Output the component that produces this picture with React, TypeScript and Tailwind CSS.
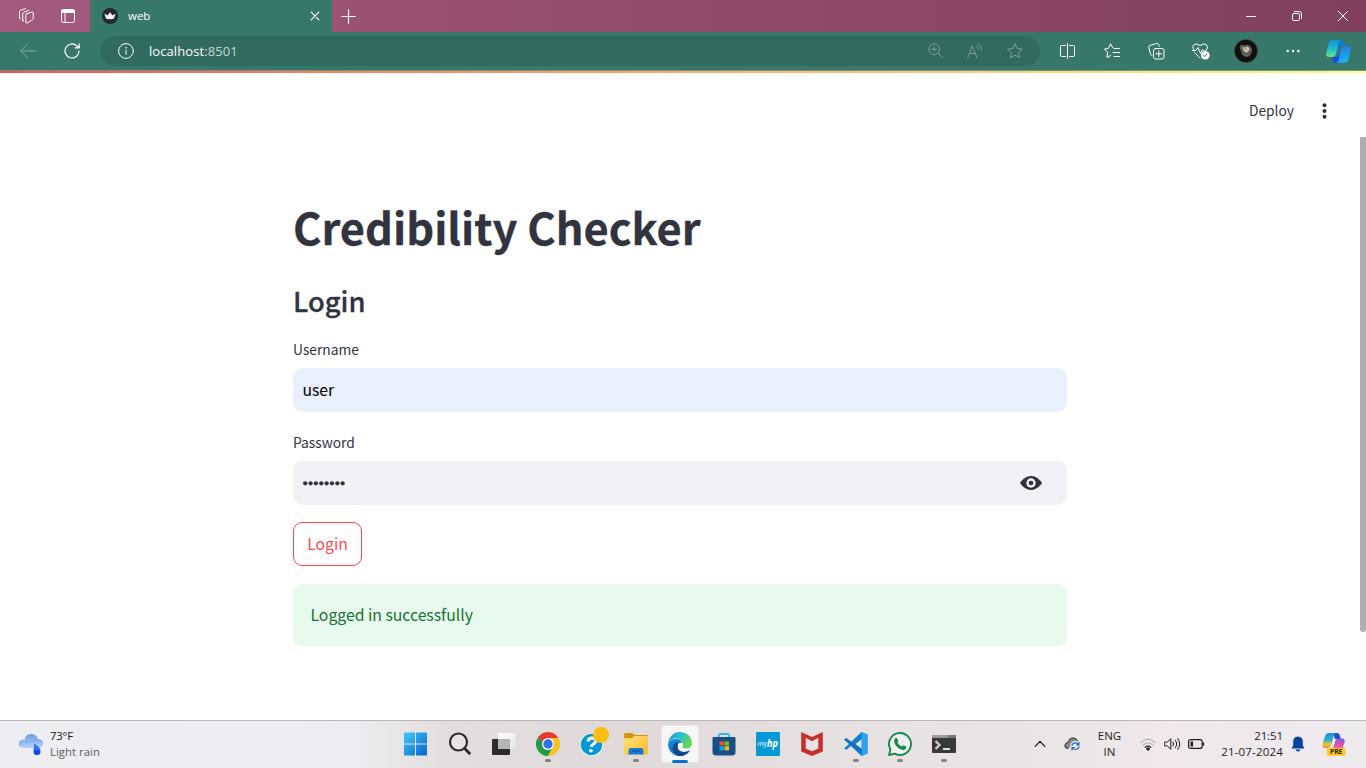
import React from "react";

const SRC = "font-['Noto_Sans_CJK_JP','Noto_Sans',sans-serif]";
const UI = "font-['Open_Sans','Noto_Sans',sans-serif]";

function Svg({ w, h = w, vb, children, sw = 1 }: { w: number; h?: number; vb?: string; children: React.ReactNode; sw?: number }) {
  return (
    <svg width={w} height={h} viewBox={vb ?? `0 0 ${w} ${h}`} fill="none" stroke="currentColor" strokeWidth={sw} strokeLinecap="round" strokeLinejoin="round" className="block shrink-0">
      {children}
    </svg>
  );
}

function TabStrip() {
  return (
    <div className="flex h-8 shrink-0 items-center bg-linear-to-r from-[#a4597f] via-[#914c6b] to-[#814060] text-white">
      <div className="flex h-8 w-[90px] items-center gap-[26px] rounded-br-[3px] pl-[18px]">
        <Svg w={16}>
          <path d="M8.6 5.9 13.8 4q1.400-.4 1.400 1v5.600q0 .9-.9 1.300L9.300 15q-1.500.6-1.500-.9V7.200q0-1 .8-1.300Z" />
          <path d="M4.700 12.700V5.700q0-1 .9-1.400l5.300-2" />
          <path d="M5.500 13.200q-.8 0-.8-.9M1.500 10.500V3.700q0-1 .9-1.400L7.500.6M2.200 11q-.7 0-.7-.8" />
        </Svg>
        <Svg w={16}>
          <rect x="1.500" y="1.500" width="13" height="13" rx="2" />
          <path d="M2 2.700h12M2 4h12" strokeWidth="2" />
          <path d="M5 5v9" />
        </Svg>
      </div>
      <div className="flex h-8 w-[242px] items-center bg-[#38786a] pl-3 pr-[12px]">
        <Svg w={16}>
          <circle cx="8" cy="8" r="8" fill="#262730" stroke="none" />
          <path d="M2.300 5.400 5.400 7.500 8 4.200l2.600 3.300 3.100-2.100-1.900 5.400q-3.800.8-7.600 0Z" fill="#fff" stroke="none" />
        </Svg>
        <span className={`${UI} ml-[10px] text-[11.500px] leading-4`}>web</span>
        <span className="ml-auto">
          <Svg w={10}><path d="m1.200 1.200 7.600 7.600m0-7.600L1.200 8.800" strokeWidth="1.200" /></Svg>
        </span>
      </div>
      <div className="flex w-[32px] justify-center">
        <Svg w={15}><path d="M7.500.8v13.400M.8 7.500h13.400" strokeWidth="1.200" /></Svg>
      </div>
      <div className="ml-auto flex">
        <div className="flex w-[46px] justify-center"><Svg w={10}><path d="M0 5.500h10" /></Svg></div>
        <div className="flex w-[46px] justify-center">
          <Svg w={10}><rect x=".5" y="2.500" width="7" height="7" rx="1.300" /><path d="M2.500.5H7q2.500 0 2.500 2.500v4.300" /></Svg>
        </div>
        <div className="flex w-[46px] justify-center"><Svg w={10}><path d="m.4.4 9.200 9.200m0-9.200L.4 9.600" /></Svg></div>
      </div>
    </div>
  );
}

function CopilotMark() {
  return (
    <svg width="25" height="23" viewBox="0 0 25 23" className="block">
      <defs>
        <linearGradient id="ca" x1="0" y1="0" x2="0" y2="1"><stop offset="0" stopColor="#1199e0" /><stop offset=".45" stopColor="#19b6cb" /><stop offset="1" stopColor="#6fe08b" /></linearGradient>
        <linearGradient id="cb" x1="0" y1="0" x2=".3" y2="1"><stop offset="0" stopColor="#2a6fdc" /><stop offset="1" stopColor="#18b4f6" /></linearGradient>
      </defs>
      <path d="M12 0h3.500q2 0 2.500 2l.8 4h-6L9 21.500l-2-4Z" fill="#0d7fd2" />
      <path d="M13 23h-3.500q-2.200 0-2.700-2L6 17h6l3-9Z" fill="#1a4fd8" />
      <path d="M6.500.3H15q-2 .2-2.700 2.700L10.500 12q-.8 5-4.500 5H3Q-.7 17 .3 12.500l2.500-9Q3.800.3 6.500.3Z" fill="url(#ca)" />
      <path d="M18.500 22.700H10q2-.2 2.700-2.700l1.800-9q.8-5 4.500-5h3q3.700 0 2.700 4.500l-2.500 9q-1 3.200-3.700 3.200Z" fill="url(#cb)" />
    </svg>
  );
}

function Toolbar() {
  return (
    <div className="flex h-[39px] shrink-0 items-center border-b border-[#6f9289] bg-[#38786a] text-white">
      <div className="flex w-[100px] items-center gap-7 pl-5">
        <span className="text-[#86aca2]"><Svg w={16}><path d="M15.500 8H.7m7-7-7 7 7 7" /></Svg></span>
        <Svg w={16}><path d="M15 8A7 7 0 1 1 12.600 2.700L15 4.700M15.200.8v4h-4" strokeWidth="1.200" /></Svg>
      </div>
      <div className="flex h-[30px] w-[940px] items-center rounded-full bg-[#316a5f] pl-[18px] pr-[5px]">
        <Svg w={16}><circle cx="8" cy="8" r="7.400" /><path d="M8 7.200v4" /><circle cx="8" cy="4.800" r=".5" fill="currentColor" strokeWidth=".5" /></Svg>
        <span className={`${UI} ml-[15px] text-[13px] leading-5 tracking-[0.080px]`}>localhost<span className="text-[#c9d8d4]">:8501</span></span>
        <div className="ml-auto flex text-[#7f9c95]">
          <div className="flex w-10 justify-center"><Svg w={15}><circle cx="6.200" cy="6.200" r="5.400" /><path d="m10.200 10.200 4.200 4.200M6.200 3.700v5M3.700 6.200h5" /></Svg></div>
          <div className="flex w-10 justify-center">
            <Svg w={16}><path d="M.8 14.500 5.300 3l4.500 11.500M2.500 10.500H8M9.500 2.500q2 1.300 1.800 4M11.500.8q3.300 1.800 3.200 6" /></Svg>
          </div>
          <div className="flex w-10 justify-center"><Svg w={16}><path d="m8 .8 2.200 4.600 5.100.7-3.700 3.500.9 5.100L8 12.300l-4.500 2.400.9-5.100L.7 6.100l5.100-.7Z" /></Svg></div>
        </div>
      </div>
      <div className="ml-[5px] flex items-center">
        <div className="flex w-[44.500px] justify-center"><Svg w={15} h={16}><path d="M5.500 2.500h-4q-1 0-1 1v9q0 1 1 1h4M9.500 2.500h4q1 0 1 1v9q0 1-1 1h-4M7.500.5v15" /></Svg></div>
        <div className="flex w-[44.500px] justify-center"><Svg w={16}><path d="M8.700 4.700 6.500.8l-2 4.500-4 .8 3.200 3.300-.8 5.100 3.800-2M10 5.500h5.500M9 9.500h6.500M10 13.500h5.500" /></Svg></div>
        <div className="flex w-[44.500px] justify-center"><Svg w={17} h={17}><rect x="5.500" y="5.500" width="10.500" height="10.500" rx="2.200" /><path d="M10.800 8v5.500M8 10.800h5.500M4 12.300q-1.300-.2-1.600-1.500L.8 4.500q-.3-1.700 1.300-2.200L8.500.6q1.700-.4 2.300 1.200l.5 1.500" /></Svg></div>
        <div className="flex w-[44.500px] justify-center">
          <Svg w={18} h={17}>
            <path d="M2 7Q-.3 3.500 2 1.700 4.600-.3 8 2.700 11.400-.3 14.200 1.700 17 4 14.500 7M.5 7.500H4l2-3 2.500 6 2-4 1 1.500H14M2.500 9.500 8 15" />
            <circle cx="13.300" cy="12.200" r="4.300" fill="#fff" stroke="none" />
            <path d="m11.500 12.300 1.300 1.300 2.300-2.700" stroke="#38786a" />
          </Svg>
        </div>
        <div className="flex w-[46px] justify-center">
          <Svg w={24}>
            <circle cx="12" cy="12" r="11.600" fill="#101011" stroke="#43504c" strokeWidth=".7" />
            <path d="m5.500 8 2-2.500 3.500 1 3-1 2.500 2 1.500 3-.5 3.500-2 3-3 1-3-1.500-2.500-4Z" fill="#5e5c58" stroke="none" />
            <path d="m8.500 8 3 .6 2.500-1 1.500 2.500-1 3-2 1-2-1.500-1.500-2Z" fill="#cfc8b8" stroke="none" />
            <path d="m7 7 2 1M11 9.500l1.500 1M14.500 12l-1.500 2M9 12l1 2" stroke="#7b552f" />
            <path d="M7.500 14.500 11 17l3-.5M16 9l1 2" stroke="#68768a" strokeWidth=".8" />
          </Svg>
        </div>
        <div className="flex w-[47.500px] justify-center"><Svg w={14} h={4}><g fill="currentColor" stroke="none"><circle cx="1.700" cy="2" r="1.200" /><circle cx="7" cy="2" r="1.200" /><circle cx="12.300" cy="2" r="1.200" /></g></Svg></div>
        <div className="flex w-[44px] justify-center"><CopilotMark /></div>
      </div>
    </div>
  );
}

function Page() {
  return (
    <main className={`${SRC} relative flex h-[647px] flex-col bg-white text-[#31333f]`}>
      <header className="flex h-[66px] shrink-0 items-center justify-end border-t-2 border-transparent pr-[39px] pt-3">
        <span className="mr-[28px] -mt-[2px] text-[13.800px] leading-5">Deploy</span>
        <svg width="5" height="16" viewBox="0 0 5 16" fill="#31333f"><circle cx="2.500" cy="2.300" r="2" /><circle cx="2.500" cy="8" r="2" /><circle cx="2.500" cy="13.700" r="2" /></svg>
      </header>
      <div className="absolute left-0 top-0 h-[2px] w-full bg-linear-to-r from-[#ff4b4b] to-[#fffd80]" />
      <div className="absolute right-0 top-[66px] h-[495px] w-[6px] rounded-b-[3px] bg-[#aeaeb2]" />
      <section className="mx-auto flex w-[774px] -translate-x-[3px] flex-col items-stretch">
        <h1 className="mt-[59px] h-[60px] whitespace-nowrap text-[43.400px] font-bold leading-[60px] [-webkit-text-stroke:0.3px_#31333f]">Credibility Checker</h1>
        <h3 className="mt-[24px] h-[40px] text-[27.400px] font-medium leading-[40px] [-webkit-text-stroke:0.3px_#31333f]">Login</h3>
        <label className="mt-[19px] h-5 text-[13.800px] leading-5">Username</label>
        <div className="mt-[9px] flex h-[44px] items-center rounded-[9px] border border-[#f0f2f6] bg-[#e8f0fe] pl-[8.500px] text-[15.700px] leading-6 text-black">user</div>
        <label className="mt-[20px] h-5 text-[13.800px] leading-5">Password</label>
        <div className="mt-[9px] flex h-[44px] items-center justify-between rounded-[9px] bg-[#f0f2f6] pl-[10px] pr-[25px]">
          <svg width="44" height="6" viewBox="0 0 44 6" fill="#31333f">
            {[0, 1, 2, 3, 4, 5, 6, 7].map((i) => <circle key={i} cx={2.200 + i * 5.350} cy="3.300" r="2.150" />)}
          </svg>
          <svg width="22" height="22" viewBox="0 0 8 8" fill="#31333f"><path d="M4.030.5C1.500.5 0 4 0 4s1.500 3.500 4.030 3.500C6.500 7.500 8 4 8 4S6.500.5 4.030.5Z" transform="matrix(1 0 0 .72 0 1.120)" /><circle cx="4" cy="4" r="1.700" fill="#f0f2f6" /><circle cx="4" cy="4" r=".85" /></svg>
        </div>
        <button className="mt-[17px] flex h-[44px] w-[69px] items-center justify-center rounded-[9px] border border-[#ff4b4b] text-[15.700px] leading-6 text-[#ff4b4b]">Login</button>
        <div className="mt-[18px] flex h-[62px] items-center rounded-[9px] bg-[#e8f9ee] pl-[17.500px] text-[15.750px] leading-6 text-[#177233]">Logged in successfully</div>
      </section>
    </main>
  );
}

function Task({ children, dot, active }: { children: React.ReactNode; dot?: boolean; active?: boolean }) {
  return (
    <div className="flex h-[47px] w-11 items-center justify-center">
      <div className={active ? "relative flex size-[38px] items-center justify-center rounded-[4px] border border-[#ece8e8] bg-[#f7f5f6]" : "relative flex size-[38px] items-center justify-center"}>
        <svg width="24" height="24" viewBox="0 0 24 24" className="block overflow-visible">{children}</svg>
        {dot && <i className="absolute bottom-[1px] left-4 h-[3px] w-[6px] rounded-full bg-[#858283]" />}
        {active && <i className="absolute -bottom-px left-[10px] h-[3px] w-4 rounded-full bg-[#0b6fd0]" />}
      </div>
    </div>
  );
}

function Taskbar() {
  return (
    <footer className={`${UI} flex h-12 shrink-0 items-center border-t border-[#b9b7b9] bg-[linear-gradient(90deg,#eeedf1_0%,#eeecf0_26%,#e2dedd_33%,#dfdad9_46%,#e6e0e0_60%,#eae4e5_74%,#f0e8eb_85%,#eeebee_100%)] pb-px text-[#1b1b1b]`}>
      <svg width="26" height="24" viewBox="0 0 26 24" className="ml-[18px] block shrink-0">
        <defs><linearGradient id="cl" x1="0" y1="0" x2="0" y2="1"><stop offset="0" stopColor="#6d9ce8" /><stop offset="1" stopColor="#b6d2fb" /></linearGradient></defs>
        <path d="M6 16q-5 0-5-4.500T6.500 8Q7.500 2 13 2t7 5q5 .7 5 4.800T19.500 16Z" fill="url(#cl)" />
        <path d="M2 13.500q-1-3 2.500-4T9 11q2-3 6-1.500 1-2.500 4.500-2 3 .5 4.500 3" fill="none" stroke="#7fa8ec" strokeWidth="1.200" />
        <path d="M16.300 12q6.200 3.200 6.200 7.500a3.500 3.500 0 0 1-7 .2Z" fill="#1746f0" />
        <path d="M16.300 12q5.200 2.700 6 6l-6.500 0Z" fill="#2e78f5" />
      </svg>
      <div className="ml-[6px] flex w-[344px] flex-col text-[11.300px] leading-4">
        <span className="tracking-[-0.2px]">73°F</span>
        <span className="tracking-[0.050px] text-[#5c5c5e]">Light rain</span>
      </div>
      <nav className="flex">
        <Task>
          <defs><linearGradient id="wn" x1="0" y1="0" x2="1" y2="1" gradientUnits="objectBoundingBox"><stop offset="0" stopColor="#44c8fb" /><stop offset="1" stopColor="#0465c8" /></linearGradient></defs>
          <path d="M0 .5h11v11H0ZM12 .5h11v11H12ZM0 12.500h11v11H0ZM12 12.500h11v11H12Z" fill="url(#wn)" />
        </Task>
        <Task>
          <circle cx="10.500" cy="10" r="8.500" fill="#e8e4e4" stroke="#2b2b2b" strokeWidth="2.200" /><path d="m16.700 16.500 4.700 4.700" stroke="#2b2b2b" strokeWidth="2.900" strokeLinecap="round" />
        </Task>
        <Task>
          <defs><linearGradient id="tv" x1="0" y1="0" x2="1" y2="1"><stop offset="0" stopColor="#fff" /><stop offset="1" stopColor="#e3e3e3" /></linearGradient></defs>
          <rect x="0" y="7" width="18" height="16" rx="1" fill="#2b2b2b" /><rect x="6" y="1" width="18" height="16" rx="1" fill="url(#tv)" /><path d="M6 7h12v10H7q-1 0-1-1Z" fill="#b5b5b5" />
        </Task>
        <Task dot>
          <path d="M12 12 1.600 6A12 12 0 0 1 22.400 6Z" fill="#e33b2e" /><path d="M12 12 1.600 6a12 12 0 0 0 10.400 18l5.200-9Z" fill="#279847" /><path d="M12 6h10.400A12 12 0 0 1 12 24l5.200-9Z" fill="#fcc31c" />
          <circle cx="12" cy="12" r="6" fill="#fff" /><circle cx="12" cy="12" r="4.700" fill="#2f73ea" />
        </Task>
        <Task>
          <circle cx="11.500" cy="12.500" r="11.500" fill="#f3fafd" /><circle cx="11.500" cy="12.500" r="10.700" fill="#0798d5" />
          <path d="M8 9.500q.4-3.500 4.200-3.500 4 .2 3.500 3.300-.4 1.700-2.600 2.900-1.600.9-1.700 2.800" fill="none" stroke="#fff" strokeWidth="3" /><circle cx="11" cy="18.700" r="1.800" fill="#fff" />
          <circle cx="21" cy="3" r="8" fill="#fdbd13" />
        </Task>
        <Task dot>
          <defs><linearGradient id="fo" x1="0" y1="0" x2="1" y2="1"><stop offset="0" stopColor="#ffe07a" /><stop offset="1" stopColor="#f9bd28" /></linearGradient></defs>
          <path d="M0 2.500q0-1.500 1.500-1.500H8L10.500 3H23q1 0 1 1v3H0Z" fill="#d59410" /><path d="M0 6h8l2.500-2H24v17q0 1.500-1.500 1.500h-21Q0 22.500 0 21Z" fill="url(#fo)" />
          <path d="M4.500 22.500v-4q0-2.500 2.500-2.500h10q2.500 0 2.500 2.500v4Z" fill="#197bd0" /><path d="M8 19h8" stroke="#0d5ba5" strokeWidth="1.300" />
        </Task>
        <Task active>
          <defs>
            <linearGradient id="e1" x1="0" y1="0" x2="1" y2=".5"><stop offset="0" stopColor="#1597d8" /><stop offset=".5" stopColor="#2ebfcd" /><stop offset="1" stopColor="#66da55" /></linearGradient>
            <linearGradient id="e2" x1="0" y1="0" x2=".7" y2="1"><stop offset="0" stopColor="#1793df" /><stop offset="1" stopColor="#0a62bd" /></linearGradient>
          </defs>
          <path d="M0 12Q1 7 8 7q5 0 6 4-4-1-4.500 3 0 6 7 6 3 0 5.500-1.800Q18.500 24 12 24A12 12 0 0 1 0 12Z" fill="url(#e2)" />
          <path d="M9.500 14q-.2-2 1.200-3.500Q6 10 4.700 14.500 4 21 10.500 23.900q7.500.6 11.500-5.700-2.500 1.800-5.500 1.800-7 0-7-6Z" fill="#114a8b" />
          <path d="M.1 11A12 12 0 0 1 12 0q11 .8 12 10.500 0 6-6.300 6-4.200 0-3-2.200Q16 12.500 14 10 11.300 6.300 7 6.500 1.500 7 .1 11Z" fill="url(#e1)" />
        </Task>
        <Task>
          <path d="M7 6V3.500Q7 2 8.500 2h7Q17 2 17 3.500V6" fill="none" stroke="#35b7ee" strokeWidth="1.800" />
          <path d="M.5 6q0-1 1-1h21q1 0 1 1v14q0 3.500-3.500 3.500H4Q.5 23.500.5 20Z" fill="#174f87" />
          <path d="M7.500 9.500H12v4H7.500Z" fill="#f35325" /><path d="M12.600 9.500H17v4h-4.400Z" fill="#81bc06" /><path d="M7.500 14.200H12v4.200H7.500Z" fill="#05a6f0" /><path d="M12.600 14.200H17v4.200h-4.400Z" fill="#ffba08" />
        </Task>
        <Task>
          <rect width="24" height="24" rx="1" fill="#0798d5" />
          <text x="1.500" y="14" className={UI} fontSize="7.500" fontStyle="italic" fill="#fff" textLength="9.500" lengthAdjust="spacingAndGlyphs">my</text>
          <text x="11" y="15" className={UI} fontSize="11" fontWeight="700" fontStyle="italic" fill="#fff" textLength="11" lengthAdjust="spacingAndGlyphs">hp</text>
        </Task>
        <Task>
          <path d="M1.200 0 12 5 22.800 0v19.500L12 24 1.200 19.500Z" fill="#c5302f" /><path d="m5.700 5.700 6.300 3.600 6.300-3.600v10.800L12 19.200l-6.300-2.700Z" fill="#e9e1e1" />
        </Task>
        <Task dot>
          <path d="m17.500 0 6 2.500v19l-6 2.500L7 14l-4.700 3.700L0 16.500 5 12 0 7.500l2.300-1.200L7 10Zm.3 7-6.300 5 6.300 5Z" fill="#127fcd" fillRule="evenodd" />
          <path d="m17.500 0 6 2.500v19l-6 2.500Z" fill="#29a4f2" />
          <path d="m0 7.500 2.300-1.200L17.800 17v4.500Z" fill="#1371bd" />
        </Task>
        <Task dot>
          <path d="m1 23 1.500-5.500A11 11 0 1 1 6.700 21.600Z" fill="#f1eeee" stroke="#16894f" strokeWidth="1.900" strokeLinejoin="round" />
          <path d="M7.200 6.200q1-1 2 .2l1 2.400q.2.700-.8 1.700 1.500 3 4.400 4.100l1.300-1.400 3 1.400q.6 2.700-2.200 3.300-3.800.5-7.300-3.400Q4.500 9.500 7.200 6.200Z" fill="#16894f" />
        </Task>
        <Task dot>
          <rect y="3" width="24" height="18" rx="1" fill="#383838" /><path d="M0 6V4q0-1 1-1h22q1 0 1 1v2Z" fill="#9a9a9a" /><path d="M16 3h7q1 0 1 1v2h-8Z" fill="#777" />
          <path d="m3.500 9 4 4-4 4" fill="none" stroke="#ccc" strokeWidth="2.400" /><path d="M11 17h7" stroke="#fff" strokeWidth="1.700" />
        </Task>
      </nav>
      <div className="flex flex-1 items-center">
        <div className="ml-[68px] w-[12px]"><Svg w={12} h={8}><path d="m1.200 6.400 4.800-5 4.800 5" strokeWidth="1.300" /></Svg></div>
        <div className="ml-[18px] w-[17px]">
          <Svg w={17} h={14}>
            <path d="M4 11.500Q.7 11.500.8 8.700T4 5.500Q5 1 9 1t5 4" fill="#8b8b8b" stroke="#262626" />
            <circle cx="11.500" cy="9" r="5.200" fill="#f1ebee" stroke="none" />
            <path d="M8 8.300q.8-2.500 3.500-2.500 2 0 3 1.500M15 9.700q-.8 2.800-3.500 2.800-2 0-3-1.500M15 5.500v2.300h-2.300M8 13v-2.500h2.300" stroke="#0d68b8" strokeWidth="1.200" />
          </Svg>
        </div>
        <div className="ml-[13.500px] w-[30px] text-center text-[11.500px] leading-4">ENG<br />IN</div>
        <div className="ml-[15px]">
          <Svg w={16} h={13}><path d="M.7 4.700q7.300-7 14.600 0M3 7.200q5-4.700 10 0" stroke="#b9b5b7" strokeWidth="1.200" /><path d="M5.300 9.300q2.700-2.500 5.400 0" strokeWidth="1.200" /><circle cx="8" cy="11" r="1.200" fill="currentColor" /></Svg>
        </div>
        <div className="ml-[8px]">
          <Svg w={17} h={14}><path d="M.7 5.200h2.600l3.500-3.500v10.600L3.300 8.800H.7Z" /><path d="M9 5q1.500 2 0 4M11.300 3.200q3 3.800 0 7.600M13.700 1.500q4.300 5.500 0 11" /></Svg>
        </div>
        <div className="ml-[7px]">
          <Svg w={17} h={10}><rect x=".6" y=".6" width="13.500" height="8.800" rx="2" strokeWidth="1.200" /><path d="M2.500 2.500H5v5H2.500Z" fill="currentColor" stroke="none" /><path d="M15.500 4v2" strokeWidth="1.400" /></Svg>
        </div>
        <div className="ml-auto w-[72px] whitespace-nowrap text-right text-[11.500px] leading-4"><div className="tracking-[-0.1px]">21:51</div><div className="-ml-2 tracking-[0.180px]">21-07-2024</div></div>
        <svg width="14" height="16" viewBox="0 0 14 16" className="ml-[8px] block"><path d="M7 .5q4.800.3 4.800 5v4l1.700 3H.500l1.700-3v-4Q2.200.8 7 .5ZM4.500 13.500h5Q9 15.500 7 15.500t-2.500-2Z" fill="#06449c" /></svg>
        <svg width="24" height="24" viewBox="0 0 24 24" className="ml-[17px] mr-[20px] block">
          <defs>
            <linearGradient id="p1" x1="0" y1="0" x2="0" y2="1"><stop offset="0" stopColor="#218bea" /><stop offset=".5" stopColor="#35b4be" /><stop offset=".75" stopColor="#e4cf3b" /><stop offset="1" stopColor="#ef8a30" /></linearGradient>
            <linearGradient id="p2" x1="0" y1="0" x2="0" y2="1"><stop offset="0" stopColor="#8f55e8" /><stop offset=".6" stopColor="#ee5a9e" /><stop offset="1" stopColor="#f58d55" /></linearGradient>
          </defs>
          <path d="M11 1h4q2 0 2.700 2l1.100 4h-6Z" fill="#1656c8" />
          <path d="M7 1h7q-1.700.5-2.300 2.500L9.700 12q-.7 4-4.500 4H3q-3.500 0-2.500-4L3 4Q4 1 7 1Z" fill="url(#p1)" />
          <path d="M17.500 20H8q2-.5 2.500-2.500l2.300-7q.7-4 4.200-4h3q3.500 0 2.500 4l-2 6.500q-.8 3-3 3Z" fill="url(#p2)" />
          <rect x="5" y="16" width="18.500" height="7.800" rx="2" fill="#ffc90e" />
          <text x="14.200" y="22.200" textAnchor="middle" className={UI} fontSize="6.600" fontWeight="700" fill="#222">PRE</text>
        </svg>
      </div>
    </footer>
  );
}

export default function App() {
  return (
    <div className="flex h-[768px] w-[1366px] flex-col overflow-hidden bg-white">
      <TabStrip />
      <Toolbar />
      <div className="h-[649px] min-h-0 flex-1"><Page /></div>
      <Taskbar />
    </div>
  );
}
